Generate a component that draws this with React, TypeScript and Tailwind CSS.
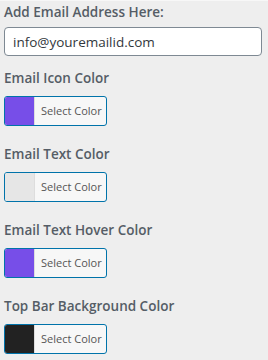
import React from 'react';

interface ColorFieldProps {
  label: string;
  color: string;
}

const ColorField: React.FC<ColorFieldProps> = ({ label, color }) => {
  return (
    <div>
      <div className="text-[13.5px] leading-5 font-semibold text-[#555d66]">{label}</div>
      <button
        type="button"
        className="mt-[8px] flex h-[30px] w-[103px] overflow-hidden rounded-[3px] border border-[#0073aa] bg-[#f7f7f7] p-0"
      >
        <span className="h-full w-[30px] border-r border-[#dddddd]" style={{ backgroundColor: color }} />
        <span className="flex h-full items-center pl-[6px] text-[11px] text-[#555555]">Select Color</span>
      </button>
    </div>
  );
};

const fields = [
  { label: 'Email Icon Color', color: '#774ee8' },
  { label: 'Email Text Color', color: '#e6e6e6' },
  { label: 'Email Text Hover Color', color: '#774ee8' },
  { label: 'Top Bar Background Color', color: '#222222' },
];

export default function App() {
  return (
    <div
      className="h-[360px] w-[268px] border-t border-[#f7f7f7] bg-[#eeeeee] px-1 pt-[1px]"
      style={{ fontFamily: '"Open Sans", "Noto Sans", sans-serif' }}
    >
      <label className="block text-[13.5px] leading-5 font-semibold text-[#555d66]">Add Email Address Here:</label>
      <input
        type="text"
        defaultValue="info@youremailid.com"
        className="mt-[5px] block h-[29px] w-[258px] rounded-[4px] border border-[#7e8993] bg-white px-2 text-[13.5px] text-[#32373c] outline-none"
      />
      <div className="mt-[12px] flex flex-col gap-[18px]">
        {fields.map((f) => (
          <ColorField key={f.label} label={f.label} color={f.color} />
        ))}
      </div>
    </div>
  );
}
